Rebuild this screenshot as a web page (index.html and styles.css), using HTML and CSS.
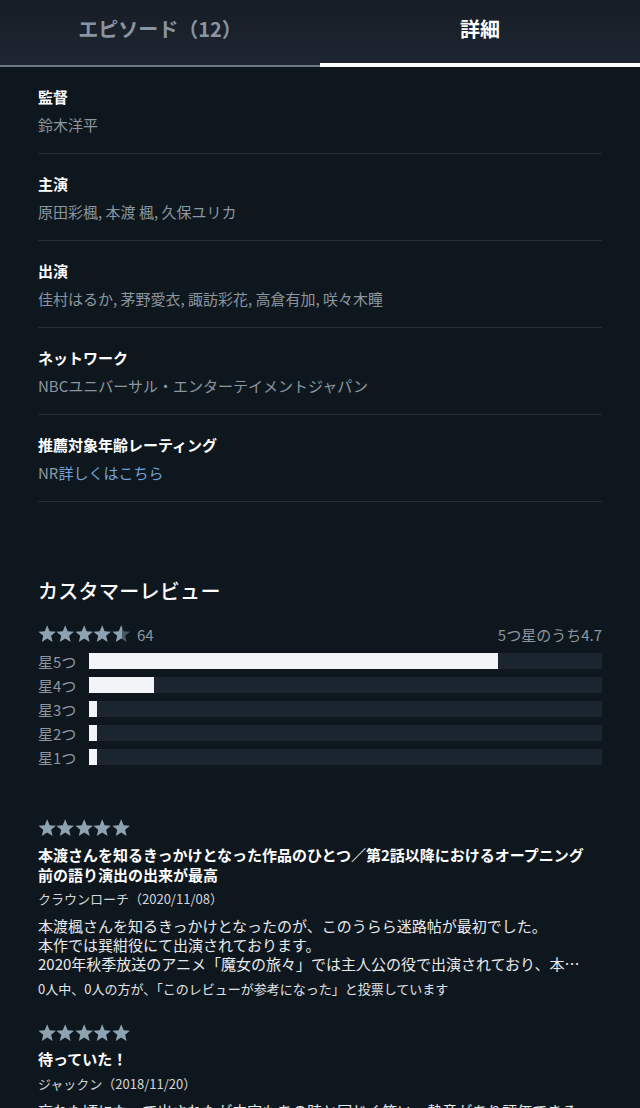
FILE: index.html
```html
<!DOCTYPE html>
<html lang="ja">
<head>
    <meta charset="UTF-8">
    <meta name="viewport" content="width=device-width, initial-scale=1.0">
    <title>詳細</title>
    <link rel="stylesheet" href="styles.css">
</head>
<body>

    <svg class="defs" width="0" height="0">
        <defs>
            <linearGradient id="partStar" x1="0" x2="1" y1="0" y2="0">
                <stop offset="55%" stop-color="#8ea3b1"/>
                <stop offset="55%" stop-color="#4a5a67"/>
            </linearGradient>
            <polygon id="star" points="10,0.3 12.65,6.66 19.51,7.21 14.28,11.69 15.88,18.39 10,14.8 4.12,18.39 5.72,11.69 0.49,7.21 7.35,6.66"/>
        </defs>
    </svg>

    <div class="tabs">
        <div class="tab">エピソード（12）</div>
        <div class="tab active">詳細</div>
    </div>

    <div class="details">
        <div class="detail-row">
            <div class="detail-label">監督</div>
            <div class="detail-value">鈴木洋平</div>
        </div>
        <div class="detail-row">
            <div class="detail-label">主演</div>
            <div class="detail-value">原田彩楓, 本渡 楓, 久保ユリカ</div>
        </div>
        <div class="detail-row">
            <div class="detail-label">出演</div>
            <div class="detail-value">佳村はるか, 茅野愛衣, 諏訪彩花, 高倉有加, 咲々木瞳</div>
        </div>
        <div class="detail-row">
            <div class="detail-label">ネットワーク</div>
            <div class="detail-value">NBCユニバーサル・エンターテイメントジャパン</div>
        </div>
        <div class="detail-row">
            <div class="detail-label">推薦対象年齢レーティング</div>
            <div class="detail-value">NR<a href="#" class="link">詳しくはこちら</a></div>
        </div>
    </div>

    <div class="reviews">
        <h2>カスタマーレビュー</h2>

        <div class="summary">
            <div class="stars">
                <svg viewBox="0 0 20 19"><use href="#star"/></svg>
                <svg viewBox="0 0 20 19"><use href="#star"/></svg>
                <svg viewBox="0 0 20 19"><use href="#star"/></svg>
                <svg viewBox="0 0 20 19"><use href="#star"/></svg>
                <svg viewBox="0 0 20 19"><use href="#star" fill="url(#partStar)"/></svg>
                <span class="count">64</span>
            </div>
            <div class="average">5つ星のうち4.7</div>
        </div>

        <div class="histogram">
            <div class="bar-row">
                <span class="bar-label">星5つ</span>
                <div class="bar"><div class="bar-fill" style="width: 79.7%"></div></div>
            </div>
            <div class="bar-row">
                <span class="bar-label">星4つ</span>
                <div class="bar"><div class="bar-fill" style="width: 12.7%"></div></div>
            </div>
            <div class="bar-row">
                <span class="bar-label">星3つ</span>
                <div class="bar"><div class="bar-fill" style="width: 1.6%"></div></div>
            </div>
            <div class="bar-row">
                <span class="bar-label">星2つ</span>
                <div class="bar"><div class="bar-fill" style="width: 1.6%"></div></div>
            </div>
            <div class="bar-row">
                <span class="bar-label">星1つ</span>
                <div class="bar"><div class="bar-fill" style="width: 1.6%"></div></div>
            </div>
        </div>

        <div class="review">
            <div class="stars small">
                <svg viewBox="0 0 20 19"><use href="#star"/></svg>
                <svg viewBox="0 0 20 19"><use href="#star"/></svg>
                <svg viewBox="0 0 20 19"><use href="#star"/></svg>
                <svg viewBox="0 0 20 19"><use href="#star"/></svg>
                <svg viewBox="0 0 20 19"><use href="#star"/></svg>
            </div>
            <div class="review-title">本渡さんを知るきっかけとなった作品のひとつ／第2話以降におけるオープニング<br>前の語り演出の出来が最高</div>
            <div class="review-author">クラウンローチ（2020/11/08）</div>
            <div class="review-body">本渡楓さんを知るきっかけとなったのが、このうらら迷路帖が最初でした。<br>本作では巽紺役にて出演されております。<br>2020年秋季放送のアニメ「魔女の旅々」では主人公の役で出演されており、本…</div>
            <div class="review-votes">0人中、0人の方が、「このレビューが参考になった」と投票しています</div>
        </div>

        <div class="review">
            <div class="stars small">
                <svg viewBox="0 0 20 19"><use href="#star"/></svg>
                <svg viewBox="0 0 20 19"><use href="#star"/></svg>
                <svg viewBox="0 0 20 19"><use href="#star"/></svg>
                <svg viewBox="0 0 20 19"><use href="#star"/></svg>
                <svg viewBox="0 0 20 19"><use href="#star"/></svg>
            </div>
            <div class="review-title">待っていた！</div>
            <div class="review-author">ジャックン（2018/11/20）</div>
            <div class="review-body">忘れた頃になって出されたが内容もあの時と同じく笑い、熱意があり評価できる</div>
        </div>
    </div>

</body>
</html>
```

FILE: styles.css
```css
body {
    margin: 0;
    background-color: #0f171e;
    color: #ffffff;
    font-family: "Noto Sans CJK JP", "Noto Sans", sans-serif;
    overflow: hidden;
}

.defs {
    position: absolute;
}

/* Tabs */
.tabs {
    display: flex;
    align-items: flex-end;
    height: 67px;
    background: linear-gradient(#161d26, #1e2632);
}

.tab {
    flex: 1;
    height: 65px;
    box-sizing: border-box;
    padding-top: 12px;
    text-align: center;
    font-size: 20px;
    font-weight: bold;
    color: #8995a0;
    border-bottom: 2px solid #6e7882;
}

.tab.active {
    color: #ffffff;
    height: 67px;
    padding-top: 14px;
    border-bottom: 4px solid #ffffff;
}

/* Details list */
.details {
    margin: 0 38px;
}

.detail-row {
    padding: 20px 0 18px;
    border-bottom: 1px solid #252e37;
}

.detail-label {
    font-size: 15px;
    line-height: 20px;
    font-weight: bold;
}

.detail-value {
    margin-top: 8px;
    font-size: 15px;
    line-height: 20px;
    color: #8b969f;
}

.link {
    color: #6fa3dc;
    text-decoration: none;
}

/* Reviews */
.reviews {
    margin: 0 38px;
}

.reviews h2 {
    margin: 75px 0 0;
    font-size: 20px;
    line-height: 28px;
    font-weight: 500;
    letter-spacing: 0.3px;
}

.summary {
    display: flex;
    justify-content: space-between;
    align-items: center;
    margin-top: 19px;
    height: 20px;
    font-size: 15px;
    color: #8b969f;
}

.stars {
    display: flex;
    align-items: center;
}

.stars svg {
    width: 18.4px;
    height: 17.5px;
    fill: #8ea3b1;
}

.count {
    margin-left: 7px;
}

.histogram {
    margin-top: 5px;
}

.bar-row {
    display: flex;
    align-items: center;
    height: 24px;
}

.bar-label {
    width: 51px;
    font-size: 15px;
    color: #8b969f;
}

.bar {
    flex: 1;
    height: 16px;
    background-color: #1b2530;
}

.bar-fill {
    height: 100%;
    background-color: #f2f4f7;
}

.review {
    margin-top: 50px;
}

.review + .review {
    margin-top: 25px;
}

.stars.small {
    height: 18px;
}

.review-title {
    margin-top: 8px;
    font-size: 15px;
    line-height: 19.5px;
    font-weight: bold;
}

.review-author {
    margin-top: 6px;
    font-size: 13px;
    line-height: 18px;
    color: #d2d6da;
}

.review-body {
    margin-top: 9px;
    font-size: 15px;
    line-height: 18.75px;
    color: #e8eaec;
    white-space: nowrap;
}

.review-votes {
    margin-top: 7px;
    font-size: 13px;
    line-height: 18px;
    color: #e0e3e6;
}
```
